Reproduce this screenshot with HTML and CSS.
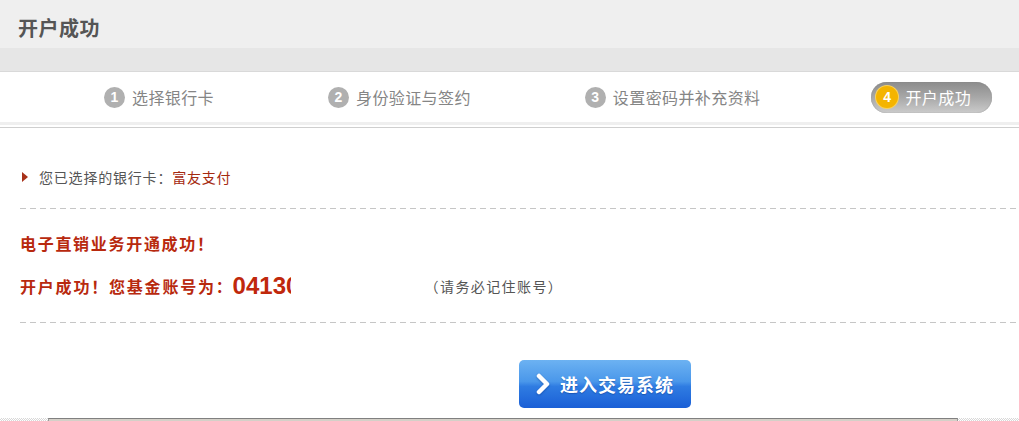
FILE: index.html
```html
<!DOCTYPE html>
<html lang="zh-CN">
<head>
  <meta charset="UTF-8">
  <title>开户成功</title>
  <link rel="stylesheet" href="styles.css">
</head>
<body>

  <div class="page-head">
    <h1>开户成功</h1>
  </div>
  <div class="head-band"></div>

  <!-- 步骤条 -->
  <div class="steps">
    <div class="step"><span class="num">1</span>选择银行卡</div>
    <div class="step"><span class="num">2</span>身份验证与签约</div>
    <div class="step"><span class="num">3</span>设置密码并补充资料</div>
    <div class="step current"><span class="num">4</span>开户成功</div>
  </div>
  <div class="steps-line"></div>

  <div class="content">
    <p class="bank-line"><span class="arrow"></span>您已选择的银行卡：<span class="bank">富友支付</span></p>
    <div class="dash"></div>

    <p class="ok-title">电子直销业务开通成功！</p>
    <div class="account">
      <span class="label">开户成功！您基金账号为：</span>
      <span class="acc-no">0413059</span>
      <span class="note">（请务必记住账号）</span>
    </div>
    <div class="dash"></div>

    <div class="btn-row">
      <a class="btn-enter" href="#">
        <svg width="16" height="22" viewBox="0 0 16 22"><polyline points="3,3 11,11 3,19" fill="none" stroke="#fff" stroke-width="4.5" stroke-linecap="round" stroke-linejoin="round"/></svg>
        进入交易系统
      </a>
    </div>
  </div>

  <div class="bottom-bar">
    <div class="checker left"></div>
    <div class="gray-bar"></div>
    <div class="checker right"></div>
  </div>

</body>
</html>
```
FILE: styles.css
```css
body {
  margin: 0;
  font-family: "Liberation Sans", "Noto Sans CJK SC", sans-serif;
  background-color: #fff;
  color: #555;
  width: 1019px;
  overflow: hidden;
}

p {
  margin: 0;
}

.page-head {
  height: 48px;
  background-color: #efefef;
  padding-left: 18px;
}

.page-head h1 {
  margin: 0;
  padding-top: 9px;
  font-size: 20px;
  line-height: 40px;
  letter-spacing: 0.5px;
  font-weight: bold;
  color: #555;
}

.head-band {
  height: 23px;
  background-color: #e6e6e6;
  border-bottom: 1px solid #d9d9d9;
}

.steps {
  height: 50px;
  display: flex;
  align-items: center;
  gap: 89px;
  padding-left: 99px;
  border-bottom: 3px solid #efefef;
}

.step {
  display: flex;
  align-items: center;
  height: 31px;
  padding: 0 20px 0 5px;
  font-size: 16px;
  letter-spacing: 0.4px;
  color: #858585;
  white-space: nowrap;
}

.step .num {
  width: 21px;
  height: 21px;
  border-radius: 50%;
  background-color: #b0b0b0;
  color: #fff;
  font-family: "Liberation Sans", sans-serif;
  font-weight: bold;
  font-size: 14px;
  line-height: 21px;
  text-align: center;
  margin-right: 7px;
}

.step.current {
  width: 96px;
  margin-left: 2px;
  border-radius: 16px;
  background: linear-gradient(#8c8c8c, #a8a8a8 50%, #cbcbcb);
  box-shadow: inset 0 0 1px #777;
  color: #fff;
  padding-right: 20px;
}

.step.current .num {
  width: 22px;
  height: 22px;
  line-height: 22px;
  background-color: #f4b400;
  box-shadow: 0 0 0 1px #f8d25c;
  margin-right: 7px;
}

.steps-line {
  margin-top: 2px;
  height: 1px;
  background-color: #cfcfcf;
}

.content {
  padding-left: 20px;
}

.bank-line {
  margin-top: 39px;
  display: flex;
  align-items: center;
  height: 20px;
  font-size: 14px;
  letter-spacing: 0.8px;
  color: #555;
}

.arrow {
  width: 0;
  height: 0;
  border-top: 5px solid transparent;
  border-bottom: 5px solid transparent;
  border-left: 6px solid #a8321a;
  margin: 0 11px 0 2px;
}

.bank {
  color: #a52a10;
}

.dash {
  height: 1px;
  margin-top: 21px;
  background: repeating-linear-gradient(to right, #c6c6c6 0 6px, transparent 6px 10px);
}

.ok-title {
  margin-top: 24px;
  font-size: 16px;
  line-height: 24px;
  letter-spacing: 1.7px;
  font-weight: bold;
  color: #b8290e;
}

.account {
  margin-top: 14px;
  display: flex;
  align-items: center;
  height: 30px;
}

.account .label {
  font-size: 16px;
  letter-spacing: 1.8px;
  font-weight: bold;
  color: #b8290e;
}

.acc-no {
  display: inline-block;
  width: 58px;
  overflow: hidden;
  white-space: nowrap;
  margin-left: -1px;
  font-family: "Liberation Sans", sans-serif;
  font-size: 24px;
  font-weight: bold;
  color: #c0280c;
  line-height: 30px;
}

.note {
  margin-left: 134px;
  font-size: 14px;
  letter-spacing: 1.4px;
  color: #555;
}

.account + .dash {
  margin-top: 21px;
}

.btn-row {
  margin-top: 37px;
  padding-left: 499px;
}

.btn-enter {
  display: flex;
  align-items: center;
  width: 172px;
  height: 48px;
  box-sizing: border-box;
  padding-left: 17px;
  border-radius: 5px;
  background: linear-gradient(#6cb2f2, #4a97ea 45%, #2f7ce2 55%, #1a5fd6);
  color: #fff;
  font-size: 18px;
  font-weight: bold;
  letter-spacing: 1px;
  text-decoration: none;
  text-shadow: 0 1px 1px rgba(0, 40, 120, 0.4);
}

.btn-enter svg {
  margin-right: 8px;
  filter: drop-shadow(0 1px 1px rgba(0, 40, 120, 0.4));
}

.bottom-bar {
  margin-top: 10px;
  display: flex;
  height: 10px;
}

.checker {
  background: repeating-conic-gradient(#d8d8d8 0 25%, #fff 0 50%) 0 0 / 2px 2px;
}

.checker.left {
  width: 48px;
}

.checker.right {
  flex: 1;
}

.gray-bar {
  width: 908px;
  background-color: #d4d0c8;
  border-top: 1px solid #808080;
  border-left: 1px solid #999;
  border-right: 1px solid #999;
}
```
